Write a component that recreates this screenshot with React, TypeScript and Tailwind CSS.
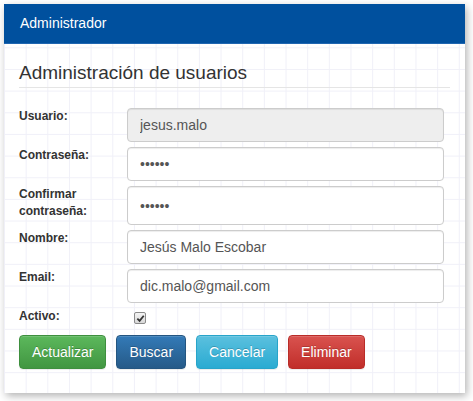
import React from "react";

function Row({ label, children, h = "h-[34px]" }: { label: React.ReactNode; children: React.ReactNode; h?: string }) {
  return (
    <div className="flex mb-[5px] pr-[6px]">
      <div className="w-[108px] shrink-0 text-[12px] leading-[17px] font-bold text-[#333]">{label}</div>
      <div className={`flex-1 ${h}`}>{children}</div>
    </div>
  );
}

function Input({ value, type = "text", disabled = false }: { value: string; type?: string; disabled?: boolean }) {
  return (
    <input
      readOnly
      type={type}
      value={value}
      className={`w-full h-full rounded-[4px] border border-[#ccc] px-[12px] text-[14px] text-[#555] outline-none shadow-[inset_0_1px_1px_rgba(0,0,0,0.075)] ${disabled ? "bg-[#eee]" : "bg-white"}`}
      style={{ fontFamily: '"Liberation Sans", Arial, sans-serif' }}
    />
  );
}

function Btn({ children, cls }: { children: React.ReactNode; cls: string }) {
  return (
    <button
      className={`h-[34px] px-[12px] rounded-[4px] border text-white text-[14px] shadow-[inset_0_1px_0_rgba(255,255,255,0.15),0_1px_1px_rgba(0,0,0,0.075)] [text-shadow:0_-1px_0_rgba(0,0,0,0.2)] ${cls}`}
    >
      {children}
    </button>
  );
}

export default function App() {
  return (
    <div className="w-[473px] h-[401px] bg-white" style={{ fontFamily: '"Liberation Sans", Arial, sans-serif' }}>
      <div className="absolute-none ml-[4px] pt-[4px]">
        <div className="w-[461px] bg-white bg-[linear-gradient(to_right,#f0f0f8_1px,transparent_1px),linear-gradient(to_bottom,#f0f0f8_1px,transparent_1px)] bg-[size:21.67px_21.67px] shadow-[2px_3px_8px_rgba(0,0,0,0.3)]">
          <div className="h-[40px] bg-[#00509e] border-b border-[#2066b0] flex items-center pl-[16px] text-white text-[14px]">
            Administrador
          </div>
          <div className="px-[15px] pt-[18px] pb-[24px]">
            <div className="text-[19px] leading-[21px] text-[#333] pb-[4px] border-b border-[#e5e5e5]">
              Administración de usuarios
            </div>
            <div className="mt-[20px]">
              <Row label="Usuario:">
                <Input value="jesus.malo" disabled />
              </Row>
              <Row label="Contraseña:">
                <Input value="123456" type="password" />
              </Row>
              <Row label={<>Confirmar<br />contraseña:</>} h="h-[39px]">
                <Input value="123456" type="password" />
              </Row>
              <Row label="Nombre:">
                <Input value="Jesús Malo Escobar" />
              </Row>
              <Row label="Email:">
                <Input value="dic.malo@gmail.com" />
              </Row>
              <Row label="Activo:" h="h-[22px]">
                <div className="pt-[4px] pl-[7px]">
                  <span className="flex items-center justify-center w-[12px] h-[12px] rounded-[2px] border border-[#8a8a8a] bg-[linear-gradient(to_bottom,#f4f4f4,#d8d8d8)]">
                    <svg width="9" height="9" viewBox="0 0 10 10">
                      <path d="M1.5 5.2 L4 7.6 L8.6 2" fill="none" stroke="#333" strokeWidth="2" />
                    </svg>
                  </span>
                </div>
              </Row>
              <div className="flex gap-[10px]">
                <Btn cls="bg-[linear-gradient(to_bottom,#5cb85c,#419641)] border-[#3e8f3e]">Actualizar</Btn>
                <Btn cls="bg-[linear-gradient(to_bottom,#337ab7,#265a88)] border-[#245580]">Buscar</Btn>
                <Btn cls="bg-[linear-gradient(to_bottom,#5bc0de,#2aabd2)] border-[#28a4c9]">Cancelar</Btn>
                <Btn cls="bg-[linear-gradient(to_bottom,#d9534f,#c12e2a)] border-[#b92c28]">Eliminar</Btn>
              </div>
            </div>
          </div>
        </div>
      </div>
    </div>
  );
}
